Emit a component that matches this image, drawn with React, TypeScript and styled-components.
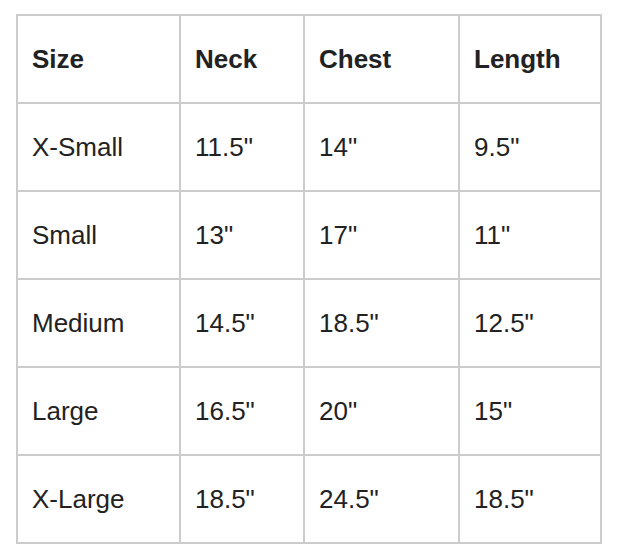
import styled, { createGlobalStyle } from "styled-components";

const GlobalStyle = createGlobalStyle`
  body {
    margin: 0;
    background: #fff;
    font-family: "Liberation Sans", Arial, sans-serif;
  }
`;

const rows = [
  ["X-Small", '11.5"', '14"', '9.5"'],
  ["Small", '13"', '17"', '11"'],
  ["Medium", '14.5"', '18.5"', '12.5"'],
  ["Large", '16.5"', '20"', '15"'],
  ["X-Large", '18.5"', '24.5"', '18.5"'],
];

const headers = ["Size", "Neck", "Chest", "Length"];

const App = () => {
  return (
    <Page>
      <GlobalStyle />
      <SizeTable>
        {headers.map((h) => (
          <Cell key={h} header>
            {h}
          </Cell>
        ))}
        {rows.map((row) =>
          row.map((value, i) => <Cell key={row[0] + i}>{value}</Cell>)
        )}
      </SizeTable>
    </Page>
  );
};

export default App;

const Page = styled.div`
  padding: 14px 16px;
`;

const SizeTable = styled.div`
  display: inline-grid;
  grid-template-columns: 161px 122px 153px 140px;
  grid-auto-rows: 86px;
  gap: 2px;
  padding: 2px;
  background: #cccccc;
`;

const Cell = styled.div<{ header?: boolean }>`
  display: flex;
  align-items: center;
  padding: 0 14px;
  background: #fff;
  color: #222;
  font-size: 26px;
  font-weight: ${(p) => (p.header ? 700 : 400)};
`;
